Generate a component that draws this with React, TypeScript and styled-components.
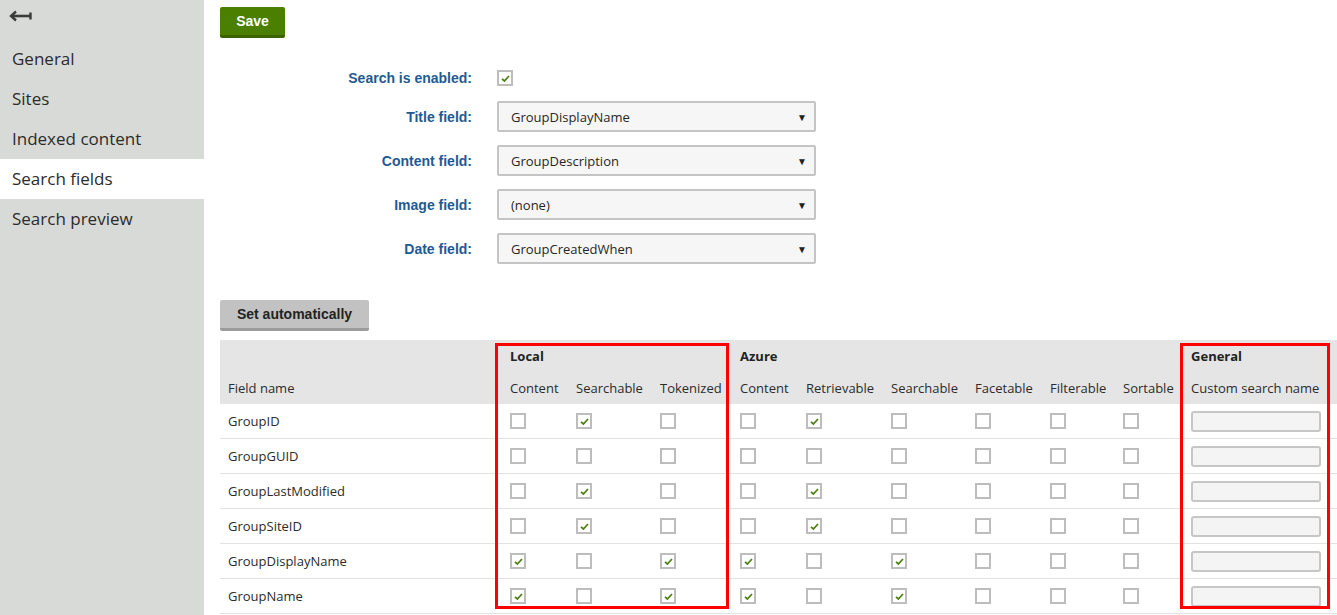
import React from 'react';
import styled, { createGlobalStyle } from 'styled-components';

const GlobalStyle = createGlobalStyle`
  html, body {
    margin: 0;
    padding: 0;
    background: #fff;
  }
  body {
    font-family: "Open Sans", "Liberation Sans", sans-serif;
    color: #262626;
  }
`;

type Row = { name: string; flags: number[] };

const rows: Row[] = [
  { name: 'GroupID', flags: [0, 1, 0, 0, 1, 0, 0, 0, 0] },
  { name: 'GroupGUID', flags: [0, 0, 0, 0, 0, 0, 0, 0, 0] },
  { name: 'GroupLastModified', flags: [0, 1, 0, 0, 1, 0, 0, 0, 0] },
  { name: 'GroupSiteID', flags: [0, 1, 0, 0, 1, 0, 0, 0, 0] },
  { name: 'GroupDisplayName', flags: [1, 0, 1, 1, 0, 1, 0, 0, 0] },
  { name: 'GroupName', flags: [1, 0, 1, 1, 0, 1, 0, 0, 0] },
];

const columns = [
  { label: 'Content', width: 66 },
  { label: 'Searchable', width: 84 },
  { label: 'Tokenized', width: 80 },
  { label: 'Content', width: 66 },
  { label: 'Retrievable', width: 85 },
  { label: 'Searchable', width: 84 },
  { label: 'Facetable', width: 75 },
  { label: 'Filterable', width: 73 },
  { label: 'Sortable', width: 68 },
];

const menu = ['General', 'Sites', 'Indexed content', 'Search fields', 'Search preview'];

const fields = [
  { label: 'Title field:', value: 'GroupDisplayName' },
  { label: 'Content field:', value: 'GroupDescription' },
  { label: 'Image field:', value: '(none)' },
  { label: 'Date field:', value: 'GroupCreatedWhen' },
];

const BackArrow = () => (
  <svg width="24" height="12" viewBox="0 0 24 12">
    <path d="M2 6 H21" stroke="#3b3b3b" strokeWidth="2.6" fill="none" />
    <path d="M7 1.5 L2 6 L7 10.5" stroke="#3b3b3b" strokeWidth="2.4" fill="none" />
    <path d="M21.5 2.5 V9.5" stroke="#3b3b3b" strokeWidth="2.4" />
  </svg>
);

const Check = ({ checked }: { checked: boolean }) => (
  <Box>
    {checked && (
      <svg width="11" height="11" viewBox="0 0 11 11">
        <path d="M2 5.8 L4.4 8 L9 3" stroke="#4d7f10" strokeWidth="1.7" fill="none" />
      </svg>
    )}
  </Box>
);

export default function App() {
  return (
    <>
      <GlobalStyle />
      <Page>
        <Sidebar>
          <BackButton>
            <BackArrow />
          </BackButton>
          {menu.map((m) => (
            <MenuItem key={m} $active={m === 'Search fields'}>
              {m}
            </MenuItem>
          ))}
        </Sidebar>
        <Main>
          <SaveButton>Save</SaveButton>
          <Form>
            <FormRow $first>
              <Label>Search is enabled:</Label>
              <Check checked />
            </FormRow>
            {fields.map((f) => (
              <FormRow key={f.label}>
                <Label>{f.label}</Label>
                <Select>
                  <span>{f.value}</span>
                  <Caret>▼</Caret>
                </Select>
              </FormRow>
            ))}
          </Form>
          <GrayButton>Set automatically</GrayButton>
          <TableWrap>
            <Table>
              <colgroup>
                <Col $w={282} />
                {columns.map((c, i) => (
                  <Col key={i} $w={c.width} />
                ))}
                <Col $w={154} />
              </colgroup>
              <thead>
                <tr>
                  <GroupHead />
                  <GroupHead colSpan={3}>Local</GroupHead>
                  <GroupHead colSpan={6}>Azure</GroupHead>
                  <GroupHead>General</GroupHead>
                </tr>
                <tr>
                  <ColHead>Field name</ColHead>
                  {columns.map((c, i) => (
                    <ColHead key={i}>{c.label}</ColHead>
                  ))}
                  <ColHead>Custom search name</ColHead>
                </tr>
              </thead>
              <tbody>
                {rows.map((r) => (
                  <tr key={r.name}>
                    <Cell>{r.name}</Cell>
                    {r.flags.map((f, i) => (
                      <Cell key={i}>
                        <Check checked={f === 1} />
                      </Cell>
                    ))}
                    <Cell>
                      <TextInput />
                    </Cell>
                  </tr>
                ))}
              </tbody>
            </Table>
            <Highlight $left={275} $width={234} />
            <Highlight $left={960} $width={150} />
          </TableWrap>
        </Main>
      </Page>
    </>
  );
}

const Page = styled.div`
  display: flex;
  min-height: 615px;
  overflow: hidden;
`;

const Sidebar = styled.nav`
  width: 204px;
  flex-shrink: 0;
  background: #d8dad7;
  min-height: 615px;
`;

const BackButton = styled.div`
  height: 39px;
  display: flex;
  align-items: flex-start;
  padding: 10px 0 0 9px;
  box-sizing: border-box;
`;

const MenuItem = styled.div<{ $active?: boolean }>`
  height: 40px;
  line-height: 40px;
  padding-left: 12px;
  font-size: 17px;
  color: #2b2b2b;
  background: ${(p) => (p.$active ? '#fff' : 'transparent')};
`;

const Main = styled.main`
  flex: 1;
  padding: 7px 0 0 16px;
  min-width: 0;
`;

const SaveButton = styled.button`
  display: block;
  width: 65px;
  height: 31px;
  border: none;
  border-bottom: 3px solid #3b6300;
  border-radius: 2px;
  background: #4b7f00;
  color: #fff;
  font-family: "Liberation Sans", Arial, sans-serif;
  font-weight: bold;
  font-size: 14px;
  padding: 0;
`;

const Form = styled.div`
  display: flex;
  flex-direction: column;
  gap: 13px;
  margin-top: 27px;
`;

const FormRow = styled.div<{ $first?: boolean }>`
  display: flex;
  align-items: center;
  gap: 25px;
  height: ${(p) => (p.$first ? '26px' : '31px')};
  margin-bottom: ${(p) => (p.$first ? '-3px' : '0')};
`;

const Label = styled.label`
  width: 252px;
  text-align: right;
  font-family: "Liberation Sans", Arial, sans-serif;
  font-weight: bold;
  font-size: 14px;
  color: #1f5a93;
`;

const Select = styled.div`
  width: 319px;
  height: 31px;
  box-sizing: border-box;
  border: 2px solid #c4c4c4;
  border-radius: 2px;
  background: #f6f6f6;
  display: flex;
  align-items: center;
  justify-content: space-between;
  padding: 0 7px 0 12px;
  font-size: 13px;
  color: #262626;
`;

const Caret = styled.span`
  font-size: 10px;
  color: #222;
`;

const GrayButton = styled.button`
  display: block;
  margin-top: 36px;
  width: 149px;
  height: 31px;
  border: none;
  border-bottom: 3px solid #9c9c9c;
  border-radius: 2px;
  background: #c2c2c2;
  color: #222;
  font-family: "Liberation Sans", Arial, sans-serif;
  font-weight: bold;
  font-size: 14px;
  padding: 0;
`;

const TableWrap = styled.div`
  position: relative;
  margin-top: 9px;
  width: 1117px;
`;

const Table = styled.table`
  border-collapse: collapse;
  table-layout: fixed;
  width: 1117px;
  font-size: 13px;
`;

const Col = styled.col<{ $w: number }>`
  width: ${(p) => p.$w}px;
`;

const GroupHead = styled.th`
  background: #e5e5e5;
  height: 32px;
  text-align: left;
  font-weight: bold;
  padding: 0 8px;
  color: #222;
`;

const ColHead = styled.th`
  background: #e5e5e5;
  height: 32px;
  text-align: left;
  font-weight: normal;
  padding: 0 8px;
  white-space: nowrap;
  color: #2b2b2b;
`;

const Cell = styled.td`
  height: 34px;
  padding: 0 8px;
  border-bottom: 1px solid #e2e2e2;
  color: #2b2b2b;
  vertical-align: middle;
`;

const Box = styled.span`
  display: flex;
  align-items: center;
  justify-content: center;
  width: 16px;
  height: 16px;
  box-sizing: border-box;
  border: 2px solid #bdbdbd;
  background: #fff;
`;

const TextInput = styled.div`
  width: 130px;
  height: 21px;
  box-sizing: border-box;
  border: 2px solid #c6c6c6;
  border-radius: 3px;
  background: #f4f4f4;
`;

const Highlight = styled.div<{ $left: number; $width: number }>`
  position: absolute;
  top: 3px;
  left: ${(p) => p.$left}px;
  width: ${(p) => p.$width}px;
  height: 266px;
  box-sizing: border-box;
  border: 3px solid #ff0000;
  pointer-events: none;
`;
